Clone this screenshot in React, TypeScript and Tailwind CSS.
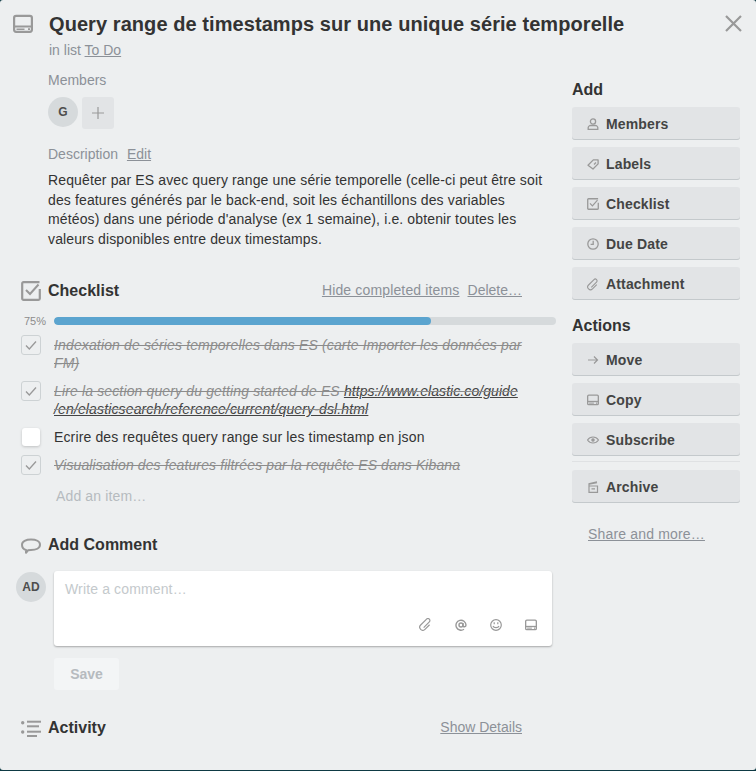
import type { ReactNode } from 'react';

const iconColor = '#999';

function CardIcon({ size = 20 }: { size?: number }) {
  return (
    <svg width={size} height={size} viewBox="0 0 20 20" fill="none" stroke={iconColor} strokeWidth="2.200">
      <rect x="1.100" y="1.800" width="17.800" height="16" rx="2" />
      <path d="M1 12.500h18" />
      <path d="M3.500 15.200h8" strokeWidth="1.600" />
      <path d="M15 15.200h2" strokeWidth="1.800" />
    </svg>
  );
}

function CheckboxIcon({ size = 20 }: { size?: number }) {
  return (
    <svg width={size} height={size} viewBox="0 0 20 20" fill="none" stroke={iconColor}>
      <path d="M18.800 8v9.500a1.300 1.300 0 0 1-1.300 1.300H2.500a1.300 1.300 0 0 1-1.300-1.300v-15a1.300 1.300 0 0 1 1.300-1.300h16" strokeWidth="2.200" />
      <path d="M5 9l4 4 8.500-9.500" strokeWidth="2" />
    </svg>
  );
}

function PersonIcon() {
  return (
    <svg width="12" height="12" viewBox="0 0 12 12" fill="none" stroke={iconColor} strokeWidth="1.300">
      <circle cx="6" cy="3.500" r="2.600" />
      <path d="M1.200 11.300V9.500c0-1 1.300-2 2.300-2h5c1 0 2.300 1 2.300 2v1.800z" />
    </svg>
  );
}

function TagIcon() {
  return (
    <svg width="12" height="12" viewBox="0 0 12 12" fill="none" stroke={iconColor} strokeWidth="1.300">
      <path d="M1 7.200l5.300-5.300h4.800v4L6 11z" strokeLinejoin="round" />
      <path d="M7 6.500l2-2" />
    </svg>
  );
}

function ClockIcon() {
  return (
    <svg width="12" height="12" viewBox="0 0 12 12" fill="none" stroke={iconColor} strokeWidth="1.300">
      <circle cx="6" cy="6" r="5.200" />
      <path d="M6.200 2.800v3.600H3.600" />
    </svg>
  );
}

function ClipIcon() {
  return (
    <svg width="13" height="13" viewBox="0 0 12 12" fill="none" stroke={iconColor} strokeWidth="1.100">
      <g transform="rotate(45 6 6)">
        <path d="M8.800 3.500v6a2.800 2.800 0 0 1-5.600 0V1.800a1.800 1.800 0 0 1 3.600 0v7.400" />
      </g>
    </svg>
  );
}

function ArrowIcon() {
  return (
    <svg width="12" height="12" viewBox="0 0 12 12" fill="none" stroke={iconColor} strokeWidth="1.200">
      <path d="M1 6h9.500M7 2.500L10.500 6 7 9.500" />
    </svg>
  );
}

function EyeIcon() {
  return (
    <svg width="12" height="12" viewBox="0 0 12 12" fill="none" stroke={iconColor} strokeWidth="1.100">
      <path d="M.5 6C2 3.800 4 3 6 3s4 .8 5.500 3C10 8.200 8 9 6 9S2 8.200.5 6z" />
      <circle cx="6" cy="6" r="1.200" fill={iconColor} />
    </svg>
  );
}

function ArchiveIcon() {
  return (
    <svg width="12" height="12" viewBox="0 0 12 12" fill="none" stroke={iconColor} strokeWidth="1.200">
      <path d="M2 5h8.500v6.300H2zM2 5V2.800L10 .8M2 3.200l8-1.600M4.500 7.800h3.500" />
    </svg>
  );
}

function AtIcon() {
  return (
    <svg width="12" height="12" viewBox="0 0 12 12" fill="none" stroke={iconColor} strokeWidth="1.400">
      <circle cx="6" cy="6" r="2" />
      <path d="M8 4v2.800c0 1.400 3 1.400 3-.8a5 5 0 1 0-2 4.200" />
    </svg>
  );
}

function SmileIcon() {
  return (
    <svg width="12" height="12" viewBox="0 0 12 12" fill="none" stroke={iconColor} strokeWidth="1.200">
      <circle cx="6" cy="6" r="5.300" />
      <path d="M4.200 3.200v2M7.800 3.200v2" />
      <path d="M3 7c.8 2.200 5.200 2.200 6 0" />
    </svg>
  );
}

function CommentIcon() {
  return (
    <svg width="20" height="20" viewBox="0 0 20 20" fill="none" stroke={iconColor} strokeWidth="2">
      <path d="M5 15C2.500 14.300 1 12.500 1 9.800 1 6.500 5 4.600 10 4.600s9 1.900 9 5.200-4 5.200-9 5.200c-1 0-2 0-3 .3l-2 2.500z" strokeLinejoin="round" />
    </svg>
  );
}

function ActivityIcon() {
  return (
    <svg width="20" height="18" viewBox="0 0 20 18" fill={iconColor}>
      <circle cx="1.700" cy="3.700" r="1.700" />
      <circle cx="1.700" cy="13" r="1.700" />
      <rect x="6" y="1.700" width="14" height="2" />
      <rect x="6" y="6.300" width="12" height="2" />
      <rect x="6" y="11.700" width="14" height="2" />
      <rect x="6" y="16" width="10" height="2" />
    </svg>
  );
}

function SideButton({ icon, label }: { icon: ReactNode; label: string }) {
  return (
    <div className="flex items-center h-[33px] pt-[1px] rounded-[3px] bg-[#e2e4e6] shadow-[inset_0_-1px_0_#c4c9cc] font-bold text-[14px] tracking-[0.15px] text-[#444] pl-[15px] mb-[7px]">
      <span className="w-[12px] h-[12px] mr-[7px] flex items-center justify-center shrink-0">{icon}</span>
      {label}
    </div>
  );
}

function CheckItem({ done = false, children }: { done?: boolean; children: ReactNode }) {
  return (
    <div className="flex">
      {done ? (
        <div className="w-[20px] h-[20px] ml-[21px] mr-[13px] mt-[-1px] rounded-[3px] border border-[#cdd2d4] flex items-center justify-center shrink-0">
          <svg width="12" height="12" viewBox="0 0 12 12" fill="none" stroke="#999" strokeWidth="1.300">
            <path d="M1 6.500L4.300 10 11 2.500" />
          </svg>
        </div>
      ) : (
        <div className="w-[18px] h-[18px] ml-[22px] mr-[14px] rounded-[3px] bg-white shadow-[0_1px_3px_rgba(0,0,0,0.2)] shrink-0" />
      )}
      <div
        className={
          done
            ? 'text-[14px] leading-[18px] tracking-[0.14px] italic line-through text-[#8c8c8c] w-[480px]'
            : 'text-[14px] leading-[18px] tracking-[0.14px] text-[#333] w-[480px]'
        }
      >
        {children}
      </div>
    </div>
  );
}

function SectionHeading({ icon, title, right }: { icon: ReactNode; title: string; right?: ReactNode }) {
  return (
    <div className="flex items-center h-[24px] pl-[21px]">
      <span className="w-[20px] h-[20px] mr-[7px] flex items-center justify-center shrink-0">{icon}</span>
      <h3 className="text-[16px] font-bold text-[#333]">{title}</h3>
      <div className="ml-auto mr-[50px] mb-[2px] flex gap-[8px] text-[14px] text-[#8c9198] underline">{right}</div>
    </div>
  );
}

export default function App() {
  return (
    <div className="w-[756px] h-[771px] bg-[#0e3a44] font-['Liberation_Sans',Arial,sans-serif]">
      <div className="h-[770px] bg-[#edeff0] rounded-[3px] relative overflow-hidden">
        {/* Close */}
        <svg className="absolute left-[725px] top-[15px]" width="17" height="17" viewBox="0 0 17 17" stroke={iconColor} strokeWidth="2.200" fill="none">
          <path d="M1 1l15 15M16 1L1 16" />
        </svg>

        {/* Header */}
        <div className="flex pt-[12px] pl-[13px]">
          <span className="w-[20px] h-[20px] mt-[2px] mr-[16px]"><CardIcon /></span>
          <div>
            <h2 className="text-[20px] leading-[24px] font-bold tracking-[0.07px] text-[#333]">
              Query range de timestamps sur une unique série temporelle
            </h2>
            <p className="text-[14px] leading-[20px] mt-[4px] text-[#8c9198]">
              in list <span className="underline">To Do</span>
            </p>
          </div>
        </div>

        <div className="flex">
          {/* Main column */}
          <div className="w-[572px] shrink-0">
            <div className="pl-[48px] pr-[16px] pt-[10px]">
              <div className="text-[14px] leading-[20px] text-[#8c9198]">Members</div>
              <div className="flex mt-[7px] gap-[4px]">
                <div className="w-[30px] h-[30px] rounded-full bg-[#d6dadc] flex items-center justify-center text-[12px] font-bold text-[#4d4d4d]">
                  G
                </div>
                <div className="w-[32px] h-[32px] rounded-[3px] bg-[#e2e4e6] flex items-center justify-center">
                  <svg width="12" height="12" viewBox="0 0 12 12" stroke={iconColor} strokeWidth="1.200">
                    <path d="M6 0v12M0 6h12" />
                  </svg>
                </div>
              </div>
              <div className="text-[14px] leading-[20px] text-[#8c9198] mt-[15px]">
                Description <span className="underline ml-[5px]">Edit</span>
              </div>
              <p className="text-[14px] leading-[19.6px] tracking-[0.13px] text-[#333] mt-[7px]">
                Requêter par ES avec query range une série temporelle (celle-ci peut être soit des features générés par le back-end, soit les échantillons des variables météos) dans une période d'analyse (ex 1 semaine), i.e. obtenir toutes les valeurs disponibles entre deux timestamps.
              </p>
            </div>

            <div className="mt-[30px]">
              <SectionHeading
                icon={<CheckboxIcon />}
                title="Checklist"
                right={
                  <>
                    <span className="tracking-[0.15px]">Hide completed items</span>
                    <span>Delete…</span>
                  </>
                }
              />
            </div>

            <div className="flex items-center mt-[10px] pl-[24px] h-[16px] mb-[7px]">
              <span className="w-[30px] text-[11px] text-[#8c8c8c]">75%</span>
              <div className="w-[502px] h-[8px] rounded-full bg-[#d6dadc] overflow-hidden">
                <div className="w-[75%] h-full rounded-full bg-[#5ba4cf]" />
              </div>
            </div>

            <CheckItem done>Indexation de séries temporelles dans ES (carte Importer les données par FM)</CheckItem>
            <div className="mt-[10px]">
              <CheckItem done>
                Lire la section query du getting started de ES{' '}
                <span className="text-[#444] underline tracking-[0.07px]">https://www.elastic.co/guide</span>
                <br />
                <span className="text-[#444] underline">/en/elasticsearch/reference/current/query-dsl.html</span>
              </CheckItem>
            </div>
            <div className="mt-[10px]">
              <CheckItem>Ecrire des requêtes query range sur les timestamp en json</CheckItem>
            </div>
            <div className="mt-[10px]">
              <CheckItem done>
                <span className="tracking-[0.11px]">Visualisation des features filtrées par la requête ES dans Kibana</span>
              </CheckItem>
            </div>
            <div className="pl-[56px] mt-[11px] text-[14px] leading-[20px] tracking-[0.14px] text-[#b6bbbf]">Add an item…</div>

            <div className="mt-[27px]">
              <SectionHeading icon={<CommentIcon />} title="Add Comment" />
            </div>

            <div className="flex mt-[14px] pl-[16px]">
              <div className="w-[30px] h-[30px] mt-[1px] rounded-full bg-[#d6dadc] flex items-center justify-center text-[12px] font-bold text-[#4d4d4d] shrink-0">
                AD
              </div>
              <div className="ml-[8px]">
                <div className="w-[498px] h-[75px] bg-white rounded-[3px] shadow-[0_1px_2px_rgba(0,0,0,0.3)] flex flex-col justify-between">
                  <div className="pl-[11px] pt-[8px] text-[14px] leading-[20px] tracking-[0.14px] text-[#c4c9cc]">Write a comment…</div>
                  <div className="flex justify-end items-center gap-[23px] pr-[15px] pb-[15px]">
                    <ClipIcon />
                    <AtIcon />
                    <SmileIcon />
                    <CardIcon size={12} />
                  </div>
                </div>
                <div className="mt-[12px] w-[65px] h-[32px] rounded-[3px] bg-[#f3f5f6] flex items-center justify-center text-[14px] font-bold text-[#b6bbbf]">
                  Save
                </div>
              </div>
            </div>

            <div className="mt-[26px]">
              <SectionHeading icon={<ActivityIcon />} title="Activity" right={<span>Show Details</span>} />
            </div>
          </div>

          {/* Sidebar */}
          <div className="w-[168px] shrink-0">
            <h3 className="text-[16px] leading-[20px] font-bold text-[#333] mt-[20px] mb-[7px]">Add</h3>
            <SideButton icon={<PersonIcon />} label="Members" />
            <SideButton icon={<TagIcon />} label="Labels" />
            <SideButton icon={<CheckboxIcon size={12} />} label="Checklist" />
            <SideButton icon={<ClockIcon />} label="Due Date" />
            <SideButton icon={<ClipIcon />} label="Attachment" />
            <h3 className="text-[16px] leading-[20px] font-bold text-[#333] mt-[16px] mb-[7px]">Actions</h3>
            <SideButton icon={<ArrowIcon />} label="Move" />
            <SideButton icon={<CardIcon size={12} />} label="Copy" />
            <SideButton icon={<EyeIcon />} label="Subscribe" />
            <div className="h-px bg-[#dfe1e3] mb-[8px] mt-[-2px]" />
            <SideButton icon={<ArchiveIcon />} label="Archive" />
            <div className="pl-[16px] mt-[21px] text-[14px] leading-[20px] tracking-[0.17px] text-[#8c9198] underline">Share and more…</div>
          </div>
        </div>
      </div>
    </div>
  );
}
